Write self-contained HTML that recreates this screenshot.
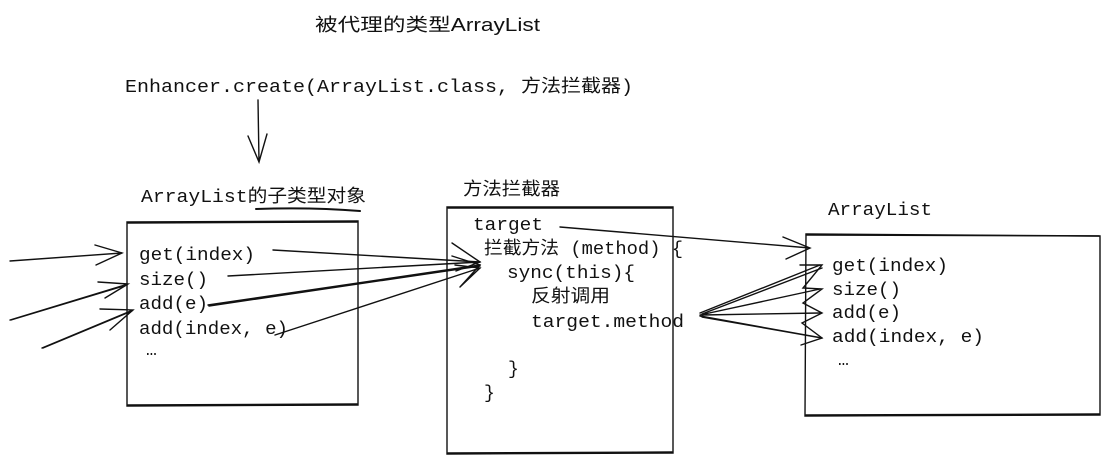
<!DOCTYPE html>
<html><head><meta charset="utf-8"><style>
html,body{margin:0;padding:0;background:#fff;}
svg{display:block}
text{font-family:"Liberation Mono","Noto Sans CJK SC",monospace;font-size:18px;fill:#111}
.c{font-family:"Liberation Sans","Noto Sans CJK SC",sans-serif}
</style></head><body>
<svg width="1106" height="463" viewBox="0 0 1106 463" xmlns="http://www.w3.org/2000/svg">
<g fill="none" stroke="#111" stroke-width="1.4" stroke-linecap="round">
<path d="M127 222 L358 221 L358 405 L127 406 Z"/>
<path d="M128 223 L357 222 M357 404 L128 405"/>
<path d="M447 207 L673 207 L673 453 L447 454 Z"/>
<path d="M448 208 L672 208 M672 452 L448 453"/>
<path d="M806 234 L1100 236 L1100 415 L805 416 Z"/>
<path d="M806 235 L1099 236 M1099 414 L806 415"/>
<path d="M258 100 L259 162 M248 136 L259 162 L267 134"/>
<path d="M256 209 Q310 207 360 211" stroke-width="2"/>
<path d="M10 261 L122 253 M95 245 L122 253 L96 265"/>
<path d="M10 320 L128 284 M98 282 L128 284 L105 298 M11 320 L127 285"/>
<path d="M42 348 L133 310 M100 309 L133 310 L110 330 M43 348 L132 311"/>
<path d="M273 250 L480 262"/>
<path d="M228 276 L480 262"/>
<path d="M208 305 L480 265 M209 306 L480 266"/>
<path d="M275 335 L480 268"/>
<path d="M452 243 L480 262 L456 271 M452 256 L480 265 L460 287 M455 265 L480 268 L460 287"/>
<path d="M560 227 L810 248 M783 237 L810 248 L786 259"/>
<path d="M700 313 L820 265 M702 314 L822 268 M700 315 L820 289 M702 315 L820 313 M700 316 L822 338 M702 317 L822 338"/>
<path d="M800 265 L822 265 L803 288 L822 289 L803 303 L822 313 L802 323 L822 338 L801 345"/>
</g>
<text x="315" y="31" class="c" textLength="225" lengthAdjust="spacingAndGlyphs">被代理的类型ArrayList</text>
<text x="125" y="92" textLength="508" lengthAdjust="spacingAndGlyphs">Enhancer.create(ArrayList.class, 方法拦截器)</text>
<text x="141" y="202" textLength="225" lengthAdjust="spacingAndGlyphs">ArrayList的子类型对象</text>
<text x="139" y="260" textLength="116" lengthAdjust="spacingAndGlyphs">get(index)</text>
<text x="139" y="285" textLength="69" lengthAdjust="spacingAndGlyphs">size()</text>
<text x="139" y="309" textLength="69" lengthAdjust="spacingAndGlyphs">add(e)</text>
<text x="139" y="334" textLength="149" lengthAdjust="spacingAndGlyphs">add(index, e)</text>
<text x="146" y="355">…</text>
<text x="463" y="195" class="c" textLength="97" lengthAdjust="spacingAndGlyphs">方法拦截器</text>
<text x="473" y="230" textLength="70" lengthAdjust="spacingAndGlyphs">target</text>
<text x="484" y="254" textLength="199" lengthAdjust="spacingAndGlyphs">拦截方法 (method) {</text>
<text x="507" y="278" textLength="128" lengthAdjust="spacingAndGlyphs">sync(this){</text>
<text x="531" y="302" textLength="79" lengthAdjust="spacingAndGlyphs">反射调用</text>
<text x="531" y="327" textLength="153" lengthAdjust="spacingAndGlyphs">target.method</text>
<text x="508" y="374">}</text>
<text x="484" y="398">}</text>
<text x="828" y="215" textLength="104" lengthAdjust="spacingAndGlyphs">ArrayList</text>
<text x="832" y="271" textLength="116" lengthAdjust="spacingAndGlyphs">get(index)</text>
<text x="832" y="295" textLength="69" lengthAdjust="spacingAndGlyphs">size()</text>
<text x="832" y="318" textLength="69" lengthAdjust="spacingAndGlyphs">add(e)</text>
<text x="832" y="342" textLength="152" lengthAdjust="spacingAndGlyphs">add(index, e)</text>
<text x="838" y="365">…</text>
</svg>
</body></html>
